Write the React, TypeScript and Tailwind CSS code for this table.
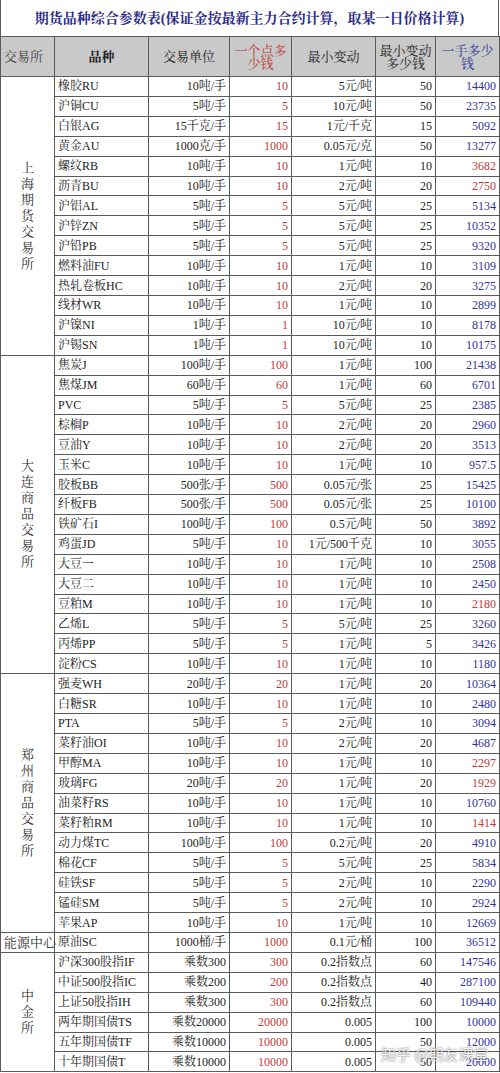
import React from "react";

type Row = [string, string, string, string, string, string, boolean?];

interface Group {
  name: string;
  vertical: boolean;
  rows: Row[];
}

const groups: Group[] = [
  {
    name: "上海期货交易所",
    vertical: true,
    rows: [
      ["橡胶RU", "10吨/手", "10", "5元/吨", "50", "14400"],
      ["沪铜CU", "5吨/手", "5", "10元/吨", "50", "23735"],
      ["白银AG", "15千克/手", "15", "1元/千克", "15", "5092"],
      ["黄金AU", "1000克/手", "1000", "0.05元/克", "50", "13277"],
      ["螺纹RB", "10吨/手", "10", "1元/吨", "10", "3682", true],
      ["沥青BU", "10吨/手", "10", "2元/吨", "20", "2750", true],
      ["沪铝AL", "5吨/手", "5", "5元/吨", "25", "5134"],
      ["沪锌ZN", "5吨/手", "5", "5元/吨", "25", "10352"],
      ["沪铅PB", "5吨/手", "5", "5元/吨", "25", "9320"],
      ["燃料油FU", "10吨/手", "10", "1元/吨", "10", "3109"],
      ["热轧卷板HC", "10吨/手", "10", "2元/吨", "20", "3275"],
      ["线材WR", "10吨/手", "10", "1元/吨", "10", "2899"],
      ["沪镍NI", "1吨/手", "1", "10元/吨", "10", "8178"],
      ["沪锡SN", "1吨/手", "1", "10元/吨", "10", "10175"],
    ],
  },
  {
    name: "大连商品交易所",
    vertical: true,
    rows: [
      ["焦炭J", "100吨/手", "100", "1元/吨", "100", "21438"],
      ["焦煤JM", "60吨/手", "60", "1元/吨", "60", "6701"],
      ["PVC", "5吨/手", "5", "5元/吨", "25", "2385"],
      ["棕榈P", "10吨/手", "10", "2元/吨", "20", "2960"],
      ["豆油Y", "10吨/手", "10", "2元/吨", "20", "3513"],
      ["玉米C", "10吨/手", "10", "1元/吨", "10", "957.5"],
      ["胶板BB", "500张/手", "500", "0.05元/张", "25", "15425"],
      ["纤板FB", "500张/手", "500", "0.05元/张", "25", "10100"],
      ["铁矿石I", "100吨/手", "100", "0.5元/吨", "50", "3892"],
      ["鸡蛋JD", "5吨/手", "10", "1元/500千克", "10", "3055"],
      ["大豆一", "10吨/手", "10", "1元/吨", "10", "2508"],
      ["大豆二", "10吨/手", "10", "1元/吨", "10", "2450"],
      ["豆粕M", "10吨/手", "10", "1元/吨", "10", "2180", true],
      ["乙烯L", "5吨/手", "5", "5元/吨", "25", "3260"],
      ["丙烯PP", "5吨/手", "5", "1元/吨", "5", "3426"],
      ["淀粉CS", "10吨/手", "10", "1元/吨", "10", "1180"],
    ],
  },
  {
    name: "郑州商品交易所",
    vertical: true,
    rows: [
      ["强麦WH", "20吨/手", "20", "1元/吨", "20", "10364"],
      ["白糖SR", "10吨/手", "10", "1元/吨", "10", "2480"],
      ["PTA", "5吨/手", "5", "2元/吨", "10", "3094"],
      ["菜籽油OI", "10吨/手", "10", "2元/吨", "20", "4687"],
      ["甲醇MA", "10吨/手", "10", "1元/吨", "10", "2297", true],
      ["玻璃FG", "20吨/手", "20", "1元/吨", "20", "1929", true],
      ["油菜籽RS", "10吨/手", "10", "1元/吨", "10", "10760"],
      ["菜籽粕RM", "10吨/手", "10", "1元/吨", "10", "1414", true],
      ["动力煤TC", "100吨/手", "100", "0.2元/吨", "20", "4910"],
      ["棉花CF", "5吨/手", "5", "5元/吨", "25", "5834"],
      ["硅铁SF", "5吨/手", "5", "2元/吨", "10", "2290"],
      ["锰硅SM", "5吨/手", "5", "2元/吨", "10", "2924"],
      ["苹果AP", "10吨/手", "10", "1元/吨", "10", "12669"],
    ],
  },
  {
    name: "能源中心",
    vertical: false,
    rows: [["原油SC", "1000桶/手", "1000", "0.1元/桶", "100", "36512"]],
  },
  {
    name: "中金所",
    vertical: true,
    rows: [
      ["沪深300股指IF", "乘数300", "300", "0.2指数点", "60", "147546"],
      ["中证500股指IC", "乘数200", "200", "0.2指数点", "40", "287100"],
      ["上证50股指IH", "乘数300", "300", "0.2指数点", "60", "109440"],
      ["两年期国债TS", "乘数20000", "20000", "0.005", "100", "10000"],
      ["五年期国债TF", "乘数10000", "10000", "0.005", "50", "12000"],
      ["十年期国债T", "乘数10000", "10000", "0.005", "50", "20000"],
    ],
  },
];

const cell = "border border-[#5a5a5a] p-0 px-[3px] leading-none whitespace-nowrap";

const App = () => {
  return (
    <div className="relative w-[500px] h-[1073px] overflow-hidden bg-white font-['Liberation_Serif','Noto_Serif_CJK_SC','Noto_Sans_CJK_SC',serif] text-[#222]">
      {/* Title */}
      <div className="h-[36px] w-[499px] border-l border-r border-[#5a5a5a] flex items-center justify-center text-[14px] font-bold text-[#2b2b8c]">
        期货品种综合参数表(保证金按最新主力合约计算，取某一日价格计算)
      </div>

      <table className="table-fixed border-collapse w-[499px] text-[12px]">
        <colgroup>
          <col className="w-[54px]" />
          <col className="w-[94px]" />
          <col className="w-[81px]" />
          <col className="w-[62px]" />
          <col className="w-[84px]" />
          <col className="w-[60px]" />
          <col className="w-[64px]" />
        </colgroup>
        <thead>
          <tr className="h-[40px] bg-[#c9c9c9] text-[13px]">
            <th className={`${cell} text-left font-normal text-[#444]`}>交易所</th>
            <th className={`${cell} font-bold text-[#222]`}>品种</th>
            <th className={`${cell} font-normal`}>交易单位</th>
            <th className={`${cell} font-normal text-[#c03a3a] whitespace-normal leading-[15px]`}>
              一个点多
              <br />
              少钱
            </th>
            <th className={`${cell} font-normal`}>最小变动</th>
            <th className={`${cell} font-normal whitespace-normal leading-[15px]`}>
              最小变动
              <br />
              多少钱
            </th>
            <th className={`${cell} font-normal text-[#33339a] whitespace-normal leading-[15px]`}>
              一手多少
              <br />
              钱
            </th>
          </tr>
        </thead>
        <tbody>
          {groups.map((group) =>
            group.rows.map((row, i) => (
              <tr key={group.name + row[0]} className="h-[19.92px]">
                {i === 0 && (
                  <td
                    rowSpan={group.rows.length}
                    className={`${cell} text-center text-[13px] text-[#333] ${group.vertical ? "" : "px-0"}`}
                  >
                    {group.vertical ? (
                      <div className="flex flex-col items-center leading-[16px]">
                        {group.name.split("").map((ch, k) => (
                          <span key={k}>{ch}</span>
                        ))}
                      </div>
                    ) : (
                      group.name
                    )}
                  </td>
                )}
                <td className={`${cell} text-left`}>{row[0]}</td>
                <td className={`${cell} text-right`}>{row[1]}</td>
                <td className={`${cell} text-right text-[#c03a3a]`}>{row[2]}</td>
                <td className={`${cell} text-right`}>{row[3]}</td>
                <td className={`${cell} text-right`}>{row[4]}</td>
                <td className={`${cell} text-right ${row[6] ? "text-[#c03a3a]" : "text-[#33339a]"}`}>{row[5]}</td>
              </tr>
            ))
          )}
        </tbody>
      </table>

      {/* Watermark */}
      <div className="absolute left-[381px] top-[1043px] text-[15px] text-white/90 font-['Noto_Sans_CJK_SC',sans-serif] [text-shadow:0_0_2px_rgba(0,0,0,0.7)]">
        知乎 @期友课堂
      </div>
    </div>
  );
};

export default App;
